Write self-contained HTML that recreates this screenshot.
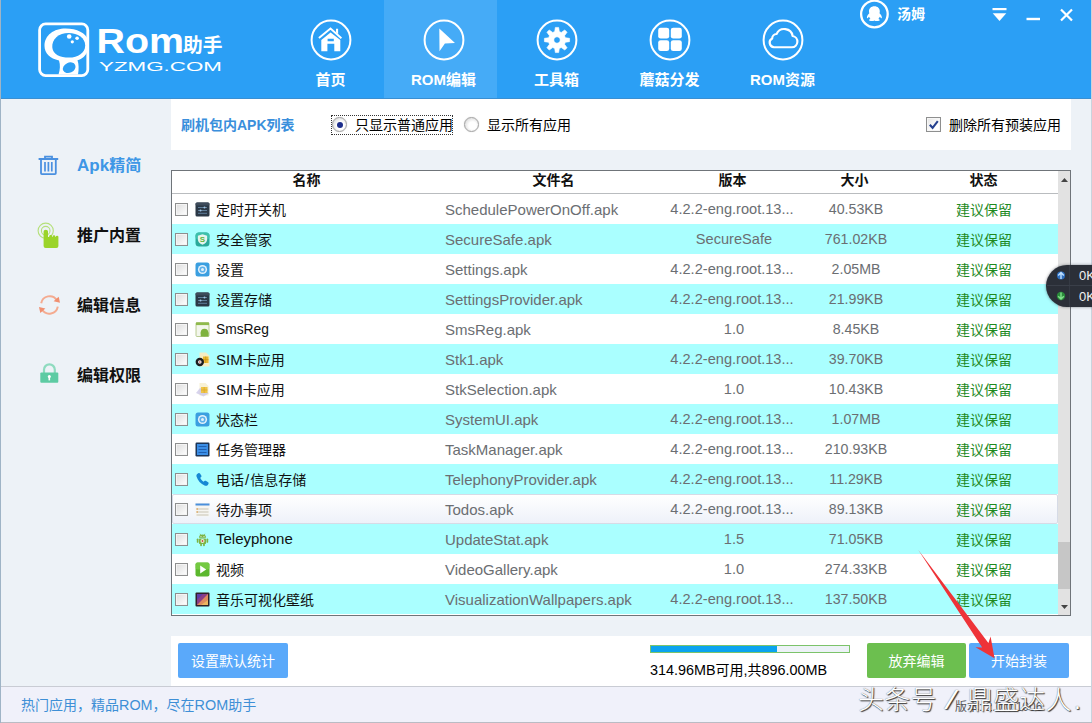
<!DOCTYPE html>
<html lang="zh-CN">
<head>
<meta charset="utf-8">
<title>ROM助手</title>
<style>
*{box-sizing:border-box;margin:0;padding:0}
html,body{width:1092px;height:723px;overflow:hidden}
body{position:relative;background:#edf2f7;font-family:"Liberation Sans","Noto Sans CJK SC",sans-serif;font-size:14px;color:#000}
.abs{position:absolute}
#hdr{left:0;top:0;width:1092px;height:99px;background:#2b9ff5;border-bottom:1px solid #3a8fd2}
#lb{left:0;top:0;width:1px;height:723px;background:#9fb4c6}
.tab{position:absolute;top:0;height:99px;width:113px;text-align:center;color:#fff;font-weight:bold;font-size:15px}
.tab.on{background:#45abf7}
.tab .ic{position:absolute;left:50%;top:18.500px;margin-left:-21px;width:42px;height:42px}
.tab .lb{position:absolute;left:0;right:0;top:70px;line-height:20px;white-space:nowrap}
.side{position:absolute;left:77px;font-size:16px;font-weight:bold;line-height:22px;color:#111;white-space:nowrap}
#p1{left:171px;top:99px;width:900px;height:51px;background:#fff}
#p2{left:171px;top:636px;width:920px;height:50px;background:#fff}
#tbl{left:171px;top:170px;width:900px;height:446px;background:#fff;border:1px solid #6f7479}
#foot{left:0;top:686px;width:1092px;height:37px;background:#f0f1fa;border-top:1px solid #c9ccd4}
.th{position:absolute;top:0;margin-left:-1.500px;height:22px;line-height:19px;font-weight:bold;font-size:14px;text-align:center;color:#111}
.row{position:absolute;left:0;width:886px;height:30px;line-height:31px;font-size:15px;white-space:nowrap}
.row.c{background:#aaffff}
.row>span{position:absolute;top:0}
.row>.nm,.row>.st{top:1px}
.row>.vr.lg{left:492px}
.row>.nm.ln{top:0}
.row.hv{background:linear-gradient(#fff,#eef1f9);border:1px solid #d6dbe6;border-radius:2px}
.row.hv>*{margin:-1px 0 0 -1px}
.cb{position:absolute;left:3px;top:9px;width:13px;height:13px;border:1px solid #8e8f8f;background:linear-gradient(135deg,#dcdcdc,#fff);box-shadow:inset 0 0 0 1px #f4f4f4}
.ico{position:absolute;left:22.500px;top:7.500px;width:15px;height:15px}
.nm{left:44px;color:#111;font-size:14px}
.fn{left:273px;color:#6b6e72}
.vr{left:494px;width:136px;text-align:center;color:#6b6e72;font-size:14.600px}
.sz{left:630px;width:108px;text-align:center;color:#6b6e72;font-size:14.200px}
.st{left:737px;width:150px;text-align:center;color:#1f8a1f;font-size:14px}
.btn{position:absolute;top:7px;height:35px;line-height:37px;color:#fff;text-align:center;font-size:14px;border-radius:2px}
.l{font-size:15px;line-height:1}
.l2{font-size:14.400px;line-height:1}
.rd{position:absolute;width:15px;height:15px;border-radius:50%;border:1px solid #a3a3a3;background:radial-gradient(circle at 58% 58%,#fff 35%,#cfcfcf 95%);box-shadow:0 0 1px #bbb}
.rd i{position:absolute;left:3.500px;top:3.500px;width:6px;height:6px;border-radius:50%;background:#1d2e8c}
</style>
</head>
<body>
<div id="hdr" class="abs"></div>

<!-- logo -->
<svg class="abs" style="left:36px;top:20px" width="190" height="60" viewBox="0 0 190 60">
<rect x="3.600" y="3.900" width="48.200" height="51.700" rx="6" fill="none" stroke="#fff" stroke-width="2.800"/>
<path d="M8.500 26 C8.500 15 18 8.500 29.500 8.500 C41 8.500 50 13 52 20 V30 C50 36 46 39 41.500 40.300 C42.800 44 43 49 42 54.500 H22.500 C24 50 24.500 45 23 40.500 C14 38.500 8.500 33 8.500 26z" fill="#fff"/>
<path d="M16.300 27.500 C15.500 19 23 13 32.500 13 C42 13 49.200 18 49.200 25.500 C49.200 33 42 37.600 33 37.600 C24 37.600 17 34.500 16.300 27.500z" fill="#2b9ff5"/>
<ellipse cx="33.200" cy="47.700" rx="6.600" ry="5" transform="rotate(-25 33.200 47.700)" fill="#2b9ff5"/>
<circle cx="33.200" cy="16.500" r="2.300" fill="#fff"/><circle cx="41.100" cy="18.200" r="1.800" fill="#fff"/><circle cx="36.300" cy="21.800" r="1.600" fill="#fff"/>
<text x="60.500" y="32.700" font-family="'Liberation Sans',sans-serif" font-weight="bold" font-size="34.500" fill="#fff" textLength="87.500" lengthAdjust="spacingAndGlyphs">Rom</text>
<text x="147" y="31.500" font-family="'Liberation Sans','Noto Sans CJK SC',sans-serif" font-weight="bold" font-size="19.500" fill="#fff" textLength="39.500" lengthAdjust="spacingAndGlyphs">助手</text>
<text x="63" y="50.700" font-family="'Liberation Sans',sans-serif" font-size="13" fill="#fff" textLength="123" lengthAdjust="spacingAndGlyphs">YZMG.COM</text>
</svg>
<!-- user / window controls -->
<svg class="abs" style="left:858px;top:0" width="34" height="30" viewBox="0 0 34 30">
<circle cx="16.400" cy="14" r="13.300" fill="none" stroke="#fff" stroke-width="2.300"/>
<path transform="translate(16.400 13.500) scale(1 .840) translate(-16.500 -12.800)" d="M16.5 4.2c-3.4 0-5.4 2.6-5.4 6 0 .9.1 1.600.3 2.300-1.300 1.500-2.400 3.500-2.400 5 0 .9.500 1 1 .6.400-.3.800-.8 1.100-1.300.3.900.8 1.700 1.400 2.400-.8.300-1.400.8-1.400 1.400 0 .9 1.300 1.200 2.800 1.200 1.200 0 2.100-.2 2.600-.6.500.4 1.400.6 2.600.6 1.500 0 2.800-.3 2.800-1.200 0-.6-.6-1.100-1.400-1.400.6-.7 1.100-1.500 1.400-2.400.3.500.7 1 1.100 1.300.5.400 1 .3 1-.6 0-1.500-1.100-3.500-2.400-5 .2-.7.3-1.400.3-2.300 0-3.400-2-6-5.400-6z" fill="#fff"/>
</svg>
<div class="abs" style="left:897px;top:4px;font-size:14px;font-weight:bold;color:#fff;line-height:20px">汤姆</div>
<svg class="abs" style="left:990px;top:6px" width="90" height="18" viewBox="0 0 90 18">
<rect x="2.500" y="2" width="14" height="2.200" fill="#fff"/><path d="M2.700 7.200h13.600l-6.800 7.800z" fill="#fff"/>
<rect x="36.500" y="11.800" width="13.500" height="2.400" fill="#fff"/>
<path d="M71 3.500l11 11M82 3.500l-11 11" stroke="#fff" stroke-width="2.200" fill="none"/>
</svg>
<!-- nav tabs -->
<div class="abs" style="left:384px;top:0;width:113px;height:98px;background:#45abf7"></div>
<div class="tab" style="left:274px"><svg class="ic" viewBox="0 0 42 42"><circle cx="21" cy="21" r="19.400" fill="none" stroke="#fff" stroke-width="2"/><path d="M8.900 19 L20.500 9.600 L31.400 19.200" fill="none" stroke="#fff" stroke-width="1.900" stroke-linejoin="miter"/><path d="M26 9.800h2.100v5.400l-2.100-1.800z" fill="#fff"/><path d="M11.300 21 L20.600 13.600 L30.300 21 V32.300 H24.300 V24.700 H17.400 V32.300 H11.300z M17.600 19.800h6.200v2.400h-6.200z" fill="#fff" fill-rule="evenodd"/></svg><div class="lb">首页</div></div>
<div class="tab" style="left:387px"><svg class="ic" viewBox="0 0 42 42"><circle cx="21" cy="21" r="19.400" fill="none" stroke="#fff" stroke-width="2"/><path d="M16.300 9.400 L32 23.900 L21.900 24.600 L16.500 32.300z" fill="#fff"/></svg><div class="lb">ROM编辑</div></div>
<div class="tab" style="left:500px"><svg class="ic" viewBox="0 0 42 42"><circle cx="21" cy="21" r="19.400" fill="none" stroke="#fff" stroke-width="2"/><path d="M19.35 8.41 L22.65 8.41 L23.32 12.62 L25.29 13.43 L28.74 10.93 L31.07 13.26 L28.57 16.71 L29.38 18.68 L33.59 19.35 L33.59 22.65 L29.38 23.32 L28.57 25.29 L31.07 28.74 L28.74 31.07 L25.29 28.57 L23.32 29.38 L22.65 33.59 L19.35 33.59 L18.68 29.38 L16.71 28.57 L13.26 31.07 L10.93 28.74 L13.43 25.29 L12.62 23.32 L8.41 22.65 L8.41 19.35 L12.62 18.68 L13.43 16.71 L10.93 13.26 L13.26 10.93 L16.71 13.43 L18.68 12.62z M21 17.800a3.200 3.200 0 1 0 0.010 0z" fill="#fff" fill-rule="evenodd" stroke="#fff" stroke-width=".6" stroke-linejoin="round"/></svg><div class="lb">工具箱</div></div>
<div class="tab" style="left:613px"><svg class="ic" viewBox="0 0 42 42"><circle cx="21" cy="21" r="19.400" fill="none" stroke="#fff" stroke-width="2"/><rect x="9.2" y="8.7" width="11" height="10.900" rx="2.400" fill="#fff"/><rect x="9.2" y="21.2" width="11" height="10.900" rx="2.400" fill="#fff"/><rect x="21.8" y="8.7" width="11" height="10.900" rx="2.400" fill="#fff"/><rect x="21.8" y="21.2" width="11" height="10.900" rx="2.400" fill="#fff"/></svg><div class="lb">蘑菇分发</div></div>
<div class="tab" style="left:726px"><svg class="ic" viewBox="0 0 42 42"><circle cx="21" cy="21" r="19.400" fill="none" stroke="#fff" stroke-width="2"/><path d="M14.5 27.5 H28.5 a4.6 4.6 0 0 0 0.6 -9.1 a6.6 6.6 0 0 0 -12.6 -1.6 a3.6 3.6 0 0 0 -3.4 3.6 a3.8 3.8 0 0 0 1.4 7.1z" fill="none" stroke="#fff" stroke-width="1.700" stroke-linejoin="round" transform="translate(20.800 18.400) scale(1.280 1.240) translate(-21.400 -19.500)"/></svg><div class="lb">ROM资源</div></div>

<!-- sidebar icons -->
<svg class="abs" style="left:36px;top:154px" width="26" height="24" viewBox="0 0 26 24">
<path d="M2.600 5h19.600M9 4.500v-1.800h7v1.800" fill="none" stroke="#4a90e0" stroke-width="1.800"/>
<path d="M5 6v13.200q0 .9.900.9h13q.9 0 .9-.9V6" fill="none" stroke="#4a90e0" stroke-width="1.800"/>
<path d="M9 8v9.500M12.400 8v9.500M15.800 8v9.500" stroke="#4a90e0" stroke-width="1.700" fill="none"/>
</svg>
<svg class="abs" style="left:34px;top:220px" width="30" height="30" viewBox="0 0 30 30">
<circle cx="11.700" cy="10.700" r="7.600" fill="none" stroke="#b5e07a" stroke-width="1.100"/>
<circle cx="11.700" cy="10.700" r="4.300" fill="none" stroke="#b5e07a" stroke-width="1.100"/>
<path d="M9.600 11.500q0-1.700 2.200-1.700t2.200 1.700v5.600h1.300v-1.200q0-1 1.400-1t1.400 1v1.200h.6v-.8q0-1 1.300-1t1.300 1v.8h.5v-.4q0-.9 1.300-.9t1.300.9v9.300q0 2-2 2h-10.800q-2 0-2-2z" fill="#9bd42a"/>
</svg>
<svg class="abs" style="left:36px;top:292px" width="28" height="26" viewBox="0 0 28 26">
<path d="M5.200 11.200a8.600 8.600 0 0 1 15.600-3.200" fill="none" stroke="#f4ab90" stroke-width="2"/>
<path d="M21.800 14.600a8.600 8.600 0 0 1 -15.600 3.200" fill="none" stroke="#f4ab90" stroke-width="2"/>
<path d="M17.600 9.200l6.400 1.600-1.300-6z" fill="#f08f70"/>
<path d="M9.400 16.600l-6.400-1.600 1.300 6z" fill="#f08f70"/>
</svg>
<svg class="abs" style="left:38px;top:362px" width="24" height="24" viewBox="0 0 24 24">
<path d="M6 11v-3.300a5.400 5.400 0 0 1 10.800 0V11" fill="none" stroke="#8edbbf" stroke-width="2.200"/>
<rect x="2.300" y="10.500" width="18" height="10.200" rx="1" fill="#5dcba3"/>
<circle cx="11.300" cy="14.400" r="1.500" fill="#fff"/><rect x="10.500" y="14.600" width="1.600" height="3.800" fill="#fff"/>
</svg>
<!-- sidebar -->
<div class="side" style="top:155px;color:#3e97e6"><span style="font-size:17px">Apk</span>精简</div>
<div class="side" style="top:225px">推广内置</div>
<div class="side" style="top:295px">编辑信息</div>
<div class="side" style="top:365px">编辑权限</div>

<div id="p1" class="abs"><div class="abs" style="left:0;top:1px;width:900px;height:50px">
<div class="abs" style="left:10px;top:15px;line-height:20px;font-size:14px;font-weight:bold;color:#3a8fdc;white-space:nowrap">刷机包内APK列表</div>
<div class="abs" style="left:160px;top:15px;width:122px;height:20px;border:1px dotted #333"></div>
<div class="rd" style="left:161px;top:17px"><i></i></div>
<div class="abs" style="left:184px;top:15px;line-height:21px;font-size:14px;white-space:nowrap">只显示普通应用</div>
<div class="rd" style="left:293px;top:17px"></div>
<div class="abs" style="left:316px;top:15px;line-height:21px;font-size:14px;white-space:nowrap">显示所有应用</div>
<div class="abs" style="left:755px;top:17px;width:15px;height:15px;border:1px solid #8e8f8f;background:linear-gradient(135deg,#e4e4e4,#fff 70%);box-shadow:inset 0 0 0 1px #f6f6f6"></div>
<svg class="abs" style="left:757px;top:20px" width="12" height="10" viewBox="0 0 11 10"><path d="M1.300 4.800l2.800 3 5.200-6.600" fill="none" stroke="#25408f" stroke-width="2.100"/></svg>
<div class="abs" style="left:778px;top:15px;line-height:21px;font-size:14px;white-space:nowrap">删除所有预装应用</div>
</div></div>
<div id="tbl" class="abs">
<div class="th" style="left:0;width:272px">名称</div><div class="th" style="left:272px;width:222px">文件名</div><div class="th" style="left:494px;width:136px">版本</div><div class="th" style="left:630px;width:108px">大小</div><div class="th" style="left:738px;width:150px">状态</div>
<div class="abs" style="left:0;top:22px;width:886px;height:1px;background:#b9bcbf"></div>
<div class="row" style="top:23px"><i class="cb"></i><svg class="ico" viewBox="0 0 15 15"><rect x=".5" y=".5" width="14" height="14" rx="1.500" fill="#2b3846"/><rect x=".5" y=".5" width="14" height="3" rx="1.500" fill="#3d4b5b"/><path d="M3 5.500h9M3 8.500h9M3 11.300h9" stroke="#5f7d99" stroke-width="1"/><circle cx="9.500" cy="5.500" r="1" fill="#9fc2e0"/><circle cx="5.500" cy="8.500" r="1" fill="#9fc2e0"/></svg><span class="nm">定时开关机</span><span class="fn">SchedulePowerOnOff.apk</span><span class="vr lg">4.2.2-eng.root.13...</span><span class="sz">40.53KB</span><span class="st">建议保留</span></div>
<div class="row c" style="top:53px"><i class="cb"></i><svg class="ico" viewBox="0 0 15 15"><rect x=".5" y=".5" width="14" height="14" rx="3.500" fill="#2aa99a"/><rect x=".5" y=".5" width="14" height="7" rx="3.500" fill="#3cc0ab"/><path d="M7.500 2.300l4.600 1.400v3.600q0 3.600-4.600 5.400-4.600-1.800-4.600-5.400v-3.600z" fill="#e6f4ee"/><text x="7.500" y="10.300" font-size="8" font-weight="bold" font-family="'Liberation Sans',sans-serif" fill="#5fb53a" text-anchor="middle">S</text></svg><span class="nm">安全管家</span><span class="fn">SecureSafe.apk</span><span class="vr">SecureSafe</span><span class="sz">761.02KB</span><span class="st">建议保留</span></div>
<div class="row" style="top:83px"><i class="cb"></i><svg class="ico" viewBox="0 0 15 15"><rect x=".5" y=".5" width="14" height="14" rx="2.500" fill="#3b9fe0"/><circle cx="7.500" cy="7.500" r="4.600" fill="#e4f1fb"/><circle cx="7.500" cy="7.500" r="3.100" fill="#5db1ea"/><circle cx="7.500" cy="7.500" r="1.500" fill="#e4f1fb"/></svg><span class="nm">设置</span><span class="fn">Settings.apk</span><span class="vr lg">4.2.2-eng.root.13...</span><span class="sz">2.05MB</span><span class="st">建议保留</span></div>
<div class="row c" style="top:113px"><i class="cb"></i><svg class="ico" viewBox="0 0 15 15"><rect x=".5" y=".5" width="14" height="14" rx="1.500" fill="#2b3846"/><rect x=".5" y=".5" width="14" height="3" rx="1.500" fill="#3d4b5b"/><path d="M3 5.500h9M3 8.500h9M3 11.300h9" stroke="#5f7d99" stroke-width="1"/><circle cx="9.500" cy="5.500" r="1" fill="#9fc2e0"/><circle cx="5.500" cy="8.500" r="1" fill="#9fc2e0"/></svg><span class="nm">设置存储</span><span class="fn">SettingsProvider.apk</span><span class="vr lg">4.2.2-eng.root.13...</span><span class="sz">21.99KB</span><span class="st">建议保留</span></div>
<div class="row" style="top:143px"><i class="cb"></i><svg class="ico" viewBox="0 0 15 15"><rect x="1" y=".5" width="13" height="14" rx="1" fill="#f3f6ec" stroke="#a9c27a" stroke-width=".8"/><rect x="1" y=".5" width="13" height="2.600" fill="#8fba4c"/><circle cx="9.500" cy="10.500" r="3.800" fill="#7fb23e"/><rect x="5.700" y="10.500" width="7.900" height="4" fill="#7fb23e"/></svg><span class="nm ln"><span class="l" style="font-size:13.800px">SmsReg</span></span><span class="fn">SmsReg.apk</span><span class="vr">1.0</span><span class="sz">8.45KB</span><span class="st">建议保留</span></div>
<div class="row c" style="top:173px"><i class="cb"></i><svg class="ico" viewBox="0 0 15 15"><path d="M4.500 .5h6.500l3.500 3.500v10.500h-10z" fill="#f6edc4"/><path d="M8 4.500h5.500v6.500h-5.500z" fill="#e9b830"/><path d="M8 7.700h5.500M10.700 4.500v6.500" stroke="#c98f1a" stroke-width=".7"/><circle cx="4.800" cy="10" r="4.200" fill="#1d1d1f"/><circle cx="4.800" cy="10" r="1.800" fill="#f4f4f4"/><circle cx="4.800" cy="10" r=".8" fill="#c44"/></svg><span class="nm"><span class="l">SIM</span>卡应用</span><span class="fn">Stk1.apk</span><span class="vr lg">4.2.2-eng.root.13...</span><span class="sz">39.70KB</span><span class="st">建议保留</span></div>
<div class="row" style="top:203px"><i class="cb"></i><svg class="ico" viewBox="0 0 15 15"><path d="M4.500 1h6l3 3v9.500h-9z" fill="#f8f1d6"/><path d="M1 11l4-5 5 1 3.500 4.500-5 3z" fill="#c9c4e6" opacity=".75"/><path d="M6 5h6.500v6h-6.500z" fill="#efc548"/><path d="M6 8h6.500M9.200 5v6" stroke="#d9a52a" stroke-width=".7"/></svg><span class="nm"><span class="l">SIM</span>卡应用</span><span class="fn">StkSelection.apk</span><span class="vr">1.0</span><span class="sz">10.43KB</span><span class="st">建议保留</span></div>
<div class="row c" style="top:233px"><i class="cb"></i><svg class="ico" viewBox="0 0 15 15"><rect x=".5" y=".5" width="14" height="14" rx="2.500" fill="#3b9fe0"/><circle cx="7.500" cy="7.500" r="4.600" fill="#e4f1fb"/><circle cx="7.500" cy="7.500" r="3.100" fill="#5db1ea"/><circle cx="7.500" cy="7.500" r="1.500" fill="#e4f1fb"/></svg><span class="nm">状态栏</span><span class="fn">SystemUI.apk</span><span class="vr lg">4.2.2-eng.root.13...</span><span class="sz">1.07MB</span><span class="st">建议保留</span></div>
<div class="row" style="top:263px"><i class="cb"></i><svg class="ico" viewBox="0 0 15 15"><rect x=".5" y=".5" width="14" height="14" rx="1.200" fill="#1c3557"/><rect x="2" y="2" width="11" height="11" fill="#3b8ee6"/><path d="M3.500 4.500h8M3.500 7.500h8M3.500 10.500h8" stroke="#1f5fb0" stroke-width="1.200"/></svg><span class="nm">任务管理器</span><span class="fn">TaskManager.apk</span><span class="vr lg">4.2.2-eng.root.13...</span><span class="sz">210.93KB</span><span class="st">建议保留</span></div>
<div class="row c" style="top:293px"><i class="cb"></i><svg class="ico" viewBox="0 0 15 15"><path d="M3.300 1.200c.6-.4 1.300-.3 1.700.3l1.300 2c.4.600.2 1.300-.3 1.700l-.8.600c.700 1.600 1.900 3 3.500 4l.7-.7c.5-.5 1.200-.6 1.800-.2l1.900 1.400c.6.4.7 1.100.3 1.700l-.6.900c-.6.900-1.800 1.200-2.800.8-4.400-1.800-7.300-5.200-8.500-9.200-.3-1 .100-2.100 1-2.700z" fill="#1688d4"/></svg><span class="nm">电话<span class="l" style="margin:0 1px">/</span>信息存储</span><span class="fn">TelephonyProvider.apk</span><span class="vr lg">4.2.2-eng.root.13...</span><span class="sz">11.29KB</span><span class="st">建议保留</span></div>
<div class="row hv" style="top:323px"><i class="cb"></i><svg class="ico" viewBox="0 0 15 15"><rect x=".5" y="1" width="14" height="13.500" fill="#f6f5f1"/><rect x=".5" y="1.500" width="14" height="2" fill="#4a8fdc"/><path d="M1.500 7h12M1.500 10h12M1.500 13h12" stroke="#d8d4c8" stroke-width="1.300"/><rect x="1.500" y="6.300" width="1.400" height="1.400" fill="#e0a050"/><rect x="1.500" y="9.300" width="1.400" height="1.400" fill="#e0a050"/></svg><span class="nm">待办事项</span><span class="fn">Todos.apk</span><span class="vr lg">4.2.2-eng.root.13...</span><span class="sz">89.13KB</span><span class="st">建议保留</span></div>
<div class="row c" style="top:353px"><i class="cb"></i><svg class="ico" viewBox="0 0 15 15"><path d="M4 5.800a3.500 3.300 0 0 1 7 0z" fill="#7cb342"/><rect x="4" y="6.400" width="7" height="5.600" rx=".8" fill="#7cb342"/><rect x="1.800" y="6.400" width="1.700" height="4.400" rx=".85" fill="#7cb342"/><rect x="11.500" y="6.400" width="1.700" height="4.400" rx=".85" fill="#7cb342"/><rect x="5.200" y="11" width="1.700" height="3.200" rx=".8" fill="#7cb342"/><rect x="8.100" y="11" width="1.700" height="3.200" rx=".8" fill="#7cb342"/><path d="M5 1.800l1 1.600M10 1.800l-1 1.600" stroke="#7cb342" stroke-width=".7"/><circle cx="7.500" cy="9" r="2" fill="#e8f3d8"/><circle cx="7.500" cy="9" r=".9" fill="#c9503a"/><circle cx="6" cy="4.400" r=".5" fill="#fff"/><circle cx="9" cy="4.400" r=".5" fill="#fff"/></svg><span class="nm ln"><span class="l">Teleyphone</span></span><span class="fn">UpdateStat.apk</span><span class="vr">1.5</span><span class="sz">71.05KB</span><span class="st">建议保留</span></div>
<div class="row" style="top:383px"><i class="cb"></i><svg class="ico" viewBox="0 0 15 15"><rect x=".5" y=".5" width="14" height="14" rx="2" fill="#5cb82e"/><rect x=".5" y=".5" width="14" height="7" rx="2" fill="#7fd04a" opacity=".7"/><path d="M5.200 3.500l6 4-6 4z" fill="#fff"/></svg><span class="nm">视频</span><span class="fn">VideoGallery.apk</span><span class="vr">1.0</span><span class="sz">274.33KB</span><span class="st">建议保留</span></div>
<div class="row c" style="top:413px"><i class="cb"></i><svg class="ico" viewBox="0 0 15 15"><rect x=".5" y=".5" width="14" height="14" rx="1" fill="#2e2028"/><rect x="2" y="2" width="11" height="11" fill="#8a3d86"/><path d="M2 13l11-11v11z" fill="#e8925a" opacity=".9"/><path d="M2 8l6-6h-6z" fill="#5a3aa8" opacity=".9"/><path d="M6 13l7-5v5z" fill="#f0c060" opacity=".8"/></svg><span class="nm">音乐可视化壁纸</span><span class="fn">VisualizationWallpapers.apk</span><span class="vr lg">4.2.2-eng.root.13...</span><span class="sz">137.50KB</span><span class="st">建议保留</span></div>
<div class="abs" style="left:886px;top:0;width:12px;height:444px;background:#e2e2e2"></div>
<div class="abs" style="left:886px;top:371px;width:12px;height:47px;background:#c6c6c6"></div>
<svg class="abs" style="left:889px;top:7px" width="7" height="4" viewBox="0 0 7 4"><path d="M0 4h7l-3.500-4z" fill="#444"/></svg>
<svg class="abs" style="left:889px;top:434px" width="7" height="4" viewBox="0 0 7 4"><path d="M0 0h7l-3.500 4z" fill="#444"/></svg>
</div>
<div id="p2" class="abs">
<div class="btn" style="left:7px;width:110px;background:#5aa9fa">设置默认统计</div>
<div class="abs" style="left:479px;top:9px;width:200px;height:8px;border:1px solid #7cc36a;background:#edf2f7"><div style="width:126px;height:6px;background:#0aa3ef"></div></div>
<div class="abs" style="left:479px;top:24px;line-height:21px;font-size:14px;white-space:nowrap"><span class="l2">314.96MB</span>可用<span class="l2">,</span>共<span class="l2">896.00MB</span></div>
<div class="btn" style="left:696px;width:99px;background:#6cbf4f">放弃编辑</div>
<div class="btn" style="left:798px;width:100px;background:#5aa9fa">开始封装</div>
</div>
<div id="foot" class="abs">
<div class="abs" style="left:21px;top:8px;line-height:21px;font-size:14px;color:#3e8fd6;white-space:nowrap">热门应用，精品<span class="l2">ROM</span>，尽在<span class="l2">ROM</span>助手</div>
<div class="abs" style="left:955px;top:11px;line-height:18px;font-size:12px;color:#555;white-space:nowrap">版本: 2.0.0.1006</div>
<div class="abs" style="left:858px;top:-4px;line-height:34px;font-size:26px;font-weight:300;color:#fff;white-space:nowrap;letter-spacing:.2px;text-shadow:1px 1px 1px #333,0 0 1px #555">头条号 <i style="font-style:italic;margin:0 5px 0 3px;display:inline-block;transform:scaleX(1.300)">/</i> 鼎盛达人<span style="margin-left:2px">.</span></div>
</div>
<!-- net speed widget -->
<div class="abs" style="left:1046px;top:265px;width:60px;height:42px;border-radius:21px 0 0 21px;background:#2b2f38;box-shadow:0 0 3px rgba(40,44,52,.55);z-index:5"></div>
<div class="abs" style="left:1069px;top:265px;width:1px;height:42px;background:#353a44;z-index:5"></div>
<div class="abs" style="left:1047px;top:285px;width:46px;height:1px;background:#3a3f49;z-index:5"></div>
<svg class="abs" style="left:1055px;top:269px;z-index:5" width="12" height="34" viewBox="0 0 12 34"><circle cx="6" cy="6.500" r="4" fill="#2f6fbf"/><path d="M6 3.500v6.500M3.200 6.400l2.800-2.900 2.800 2.900" fill="none" stroke="#bfe0ff" stroke-width="1.400"/><circle cx="6" cy="27" r="4.200" fill="#2a8a3a"/><path d="M6 23.500v6.500M3.200 27.200l2.800 2.900 2.800-2.900" fill="none" stroke="#7fe08a" stroke-width="1.400"/></svg>
<div class="abs" style="left:1079px;top:268px;font-size:13px;line-height:16px;color:#f2f2f2;white-space:nowrap;z-index:5">0K</div>
<div class="abs" style="left:1079px;top:289px;font-size:13px;line-height:16px;color:#f2f2f2;white-space:nowrap;z-index:5">0K</div>
<!-- red arrow -->
<svg class="abs" style="left:900px;top:530px" width="120" height="150" viewBox="900 530 120 150"><path d="M918.300 550.100L988.400 643L990.600 636.500L994.500 658.300L975.500 647.300L982.200 647.400z" fill="#ee3338"/></svg>
<div class="abs" style="left:1091px;top:0;width:1px;height:723px;background:#c9d3dd"></div>
<div class="abs" style="left:0;top:722px;width:1092px;height:1px;background:#b9bcc4"></div>
<div id="lb" class="abs"></div>
</body>
</html>
